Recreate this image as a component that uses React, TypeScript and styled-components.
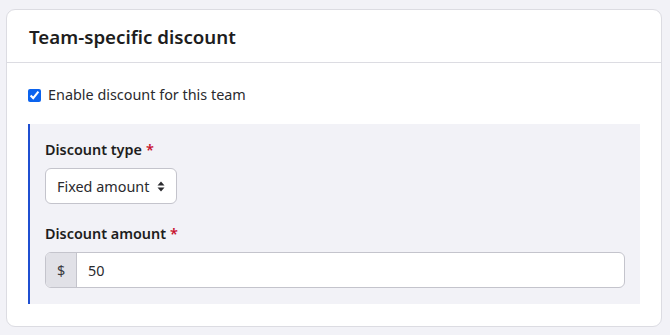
import React from "react";
import styled, { createGlobalStyle } from "styled-components";

const Global = createGlobalStyle`
  html, body { margin: 0; padding: 0; background: #f2f2f7; }
  body { font-family: "Noto Sans", "Open Sans", sans-serif; color: #1d1d20; }
  * { box-sizing: border-box; }
`;

const Page = styled.div`
  padding: 9px 8px 10px 6px;
`;

const Card = styled.section`
  background: #fff;
  border: 1px solid #dcdce2;
  border-radius: 9px;
`;

const CardHeader = styled.header`
  height: 53px;
  padding: 0 22px;
  display: flex;
  align-items: center;
  border-bottom: 1px solid #dcdce2;
`;

const Title = styled.h3`
  margin: 0;
  font-size: 18.72px;
  font-weight: 600;
  color: #1d1d20;
`;

const CardBody = styled.div`
  padding: 22px 21px 22px 21px;
`;

const CheckRow = styled.label`
  display: flex;
  align-items: center;
  gap: 7px;
  font-size: 14.4px;
  line-height: 20px;
  color: #2a2a2e;
  margin-bottom: 19px;
  input {
    margin: 0;
    width: 13px;
    height: 13px;
    accent-color: #0b63ee;
  }
`;

const Panel = styled.div`
  background: #f2f2f7;
  border-left: 2px solid #1f4fd1;
  padding: 16px 15px 16px 15px;
  display: flex;
  flex-direction: column;
`;

const Field = styled.div<{ $last?: boolean }>`
  display: flex;
  flex-direction: column;
  margin-bottom: ${(p) => (p.$last ? "0" : "20px")};
`;

const Label = styled.label`
  font-size: 14.4px;
  font-weight: 600;
  color: #1d1d20;
  margin-bottom: 8px;
  line-height: 20px;
`;

const Req = styled.span`
  color: #c8102e;
  margin-left: 4px;
`;

const SelectBox = styled.div`
  align-self: flex-start;
  height: 36px;
  width: 132px;
  display: flex;
  align-items: center;
  justify-content: space-between;
  padding: 0 11px 0 11px;
  background: #fff;
  border: 1px solid #c4c4cc;
  border-radius: 6px;
  font-size: 14.4px;
  color: #2a2a2e;
`;

const InputGroup = styled.div`
  display: flex;
  height: 36px;
  width: 580px;
  border: 1px solid #c4c4cc;
  border-radius: 6px;
  overflow: hidden;
  background: #fff;
`;

const Addon = styled.span`
  width: 31px;
  display: flex;
  align-items: center;
  justify-content: center;
  background: #e1e1e7;
  border-right: 1px solid #c4c4cc;
  font-size: 14.4px;
  color: #3a3a40;
`;

const TextInput = styled.input`
  flex: 1;
  border: 0;
  outline: none;
  padding: 0 11px;
  font-family: inherit;
  font-size: 14.4px;
  color: #2a2a2e;
  background: transparent;
`;

const Caret = () => (
  <svg width="8" height="11" viewBox="0 0 8 11" aria-hidden>
    <path d="M4 0.5 L7.5 4.5 H0.5 Z" fill="#2a2a2e" />
    <path d="M4 10.5 L7.5 6.5 H0.5 Z" fill="#2a2a2e" />
  </svg>
);

export default function App() {
  return (
    <>
      <Global />
      <Page>
        <Card>
          <CardHeader>
            <Title>Team-specific discount</Title>
          </CardHeader>
          <CardBody>
            <CheckRow>
              <input type="checkbox" defaultChecked />
              Enable discount for this team
            </CheckRow>
            <Panel>
              <Field>
                <Label>
                  Discount type<Req>*</Req>
                </Label>
                <SelectBox>
                  <span>Fixed amount</span>
                  <Caret />
                </SelectBox>
              </Field>
              <Field $last>
                <Label>
                  Discount amount<Req>*</Req>
                </Label>
                <InputGroup>
                  <Addon>$</Addon>
                  <TextInput defaultValue="50" />
                </InputGroup>
              </Field>
            </Panel>
          </CardBody>
        </Card>
      </Page>
    </>
  );
}
